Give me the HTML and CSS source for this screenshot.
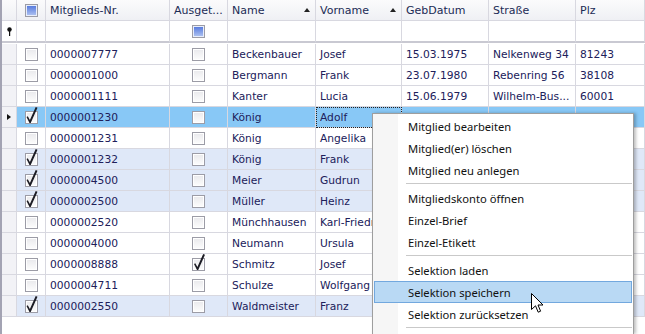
FILE: index.html
```html
<!DOCTYPE html>
<html lang="de">
<head>
    <meta charset="UTF-8">
    <title>Mitglieder</title>
    <link rel="stylesheet" href="styles.css">
</head>
<body>
    <div class="grid">
        <div class="row head">
            <div class="cell ind"></div>
            <div class="cell chk"><span class="box blue"></span></div>
            <div class="cell">Mitglieds-Nr.</div>
            <div class="cell">Ausget...</div>
            <div class="cell sort">Name<span class="arrow"></span></div>
            <div class="cell sort">Vorname<span class="arrow"></span></div>
            <div class="cell">GebDatum</div>
            <div class="cell">Straße</div>
            <div class="cell">Plz</div>
        </div>
        <div class="row filter">
            <div class="cell ind">
                <svg width="7" height="9" viewBox="0 0 7 9"><circle cx="3.5" cy="2.5" r="2.2" fill="#111"/><rect x="3" y="4" width="1.2" height="5" fill="#111"/></svg>
            </div>
            <div class="cell"></div>
            <div class="cell"></div>
            <div class="cell chk"><span class="box blue"></span></div>
            <div class="cell"></div>
            <div class="cell"></div>
            <div class="cell"></div>
            <div class="cell"></div>
            <div class="cell"></div>
        </div>

        <div class="row">
            <div class="cell ind"></div><div class="cell chk"><span class="box"></span></div>
            <div class="cell">0000007777</div><div class="cell chk"><span class="box"></span></div>
            <div class="cell">Beckenbauer</div><div class="cell">Josef</div>
            <div class="cell">15.03.1975</div><div class="cell">Nelkenweg 34</div><div class="cell">81243</div>
        </div>
        <div class="row">
            <div class="cell ind"></div><div class="cell chk"><span class="box"></span></div>
            <div class="cell">0000001000</div><div class="cell chk"><span class="box"></span></div>
            <div class="cell">Bergmann</div><div class="cell">Frank</div>
            <div class="cell">23.07.1980</div><div class="cell">Rebenring 56</div><div class="cell">38108</div>
        </div>
        <div class="row">
            <div class="cell ind"></div><div class="cell chk"><span class="box"></span></div>
            <div class="cell">0000001111</div><div class="cell chk"><span class="box"></span></div>
            <div class="cell">Kanter</div><div class="cell">Lucia</div>
            <div class="cell">15.06.1979</div><div class="cell">Wilhelm-Bus...</div><div class="cell">60001</div>
        </div>
        <div class="row selected">
            <div class="cell ind"><span class="current"></span></div><div class="cell chk"><span class="box on"></span></div>
            <div class="cell">0000001230</div><div class="cell chk"><span class="box"></span></div>
            <div class="cell">König</div><div class="cell focus">Adolf</div>
            <div class="cell"></div><div class="cell"></div><div class="cell"></div>
        </div>
        <div class="row">
            <div class="cell ind"></div><div class="cell chk"><span class="box"></span></div>
            <div class="cell">0000001231</div><div class="cell chk"><span class="box"></span></div>
            <div class="cell">König</div><div class="cell">Angelika</div>
            <div class="cell"></div><div class="cell"></div><div class="cell"></div>
        </div>
        <div class="row marked">
            <div class="cell ind"></div><div class="cell chk"><span class="box on"></span></div>
            <div class="cell">0000001232</div><div class="cell chk"><span class="box"></span></div>
            <div class="cell">König</div><div class="cell">Frank</div>
            <div class="cell"></div><div class="cell"></div><div class="cell"></div>
        </div>
        <div class="row marked">
            <div class="cell ind"></div><div class="cell chk"><span class="box on"></span></div>
            <div class="cell">0000004500</div><div class="cell chk"><span class="box"></span></div>
            <div class="cell">Meier</div><div class="cell">Gudrun</div>
            <div class="cell"></div><div class="cell"></div><div class="cell"></div>
        </div>
        <div class="row marked">
            <div class="cell ind"></div><div class="cell chk"><span class="box on"></span></div>
            <div class="cell">0000002500</div><div class="cell chk"><span class="box"></span></div>
            <div class="cell">Müller</div><div class="cell">Heinz</div>
            <div class="cell"></div><div class="cell"></div><div class="cell"></div>
        </div>
        <div class="row">
            <div class="cell ind"></div><div class="cell chk"><span class="box"></span></div>
            <div class="cell">0000002520</div><div class="cell chk"><span class="box"></span></div>
            <div class="cell">Münchhausen</div><div class="cell">Karl-Friedrich</div>
            <div class="cell"></div><div class="cell"></div><div class="cell"></div>
        </div>
        <div class="row">
            <div class="cell ind"></div><div class="cell chk"><span class="box"></span></div>
            <div class="cell">0000004000</div><div class="cell chk"><span class="box"></span></div>
            <div class="cell">Neumann</div><div class="cell">Ursula</div>
            <div class="cell"></div><div class="cell"></div><div class="cell"></div>
        </div>
        <div class="row">
            <div class="cell ind"></div><div class="cell chk"><span class="box"></span></div>
            <div class="cell">0000008888</div><div class="cell chk"><span class="box on"></span></div>
            <div class="cell">Schmitz</div><div class="cell">Josef</div>
            <div class="cell"></div><div class="cell"></div><div class="cell"></div>
        </div>
        <div class="row">
            <div class="cell ind"></div><div class="cell chk"><span class="box"></span></div>
            <div class="cell">0000004711</div><div class="cell chk"><span class="box"></span></div>
            <div class="cell">Schulze</div><div class="cell">Wolfgang</div>
            <div class="cell"></div><div class="cell"></div><div class="cell"></div>
        </div>
        <div class="row marked">
            <div class="cell ind"></div><div class="cell chk"><span class="box on"></span></div>
            <div class="cell">0000002550</div><div class="cell chk"><span class="box"></span></div>
            <div class="cell">Waldmeister</div><div class="cell">Franz</div>
            <div class="cell"></div><div class="cell"></div><div class="cell"></div>
        </div>
    </div>

    <!-- Kontextmenue -->
    <div class="menu">
        <div class="item">Mitglied bearbeiten</div>
        <div class="item">Mitglied(er) löschen</div>
        <div class="item">Mitglied neu anlegen</div>
        <div class="sep"></div>
        <div class="item">Mitgliedskonto öffnen</div>
        <div class="item">Einzel-Brief</div>
        <div class="item">Einzel-Etikett</div>
        <div class="sep"></div>
        <div class="item">Selektion laden</div>
        <div class="item hot">Selektion speichern
            <svg class="cursor" width="13" height="21" viewBox="0 0 13 21"><path d="M0.5 0.5 L0.5 16.5 L4.5 12.8 L7.2 19.2 L9.6 18.2 L7 12 L12 12 Z" fill="#fff" stroke="#000" stroke-width="1" stroke-linejoin="round"/></svg>
        </div>
        <div class="item">Selektion zurücksetzen</div>
        <div class="sep"></div>
    </div>
</body>
</html>
```

FILE: styles.css
```css
body {
    margin: 0;
    background: #fff;
    font-family: "DejaVu Sans", Verdana, sans-serif;
    font-size: 10.7px;
    color: #20205a;
    overflow: hidden;
    height: 334px;
}

.grid {
    height: 334px;
    border-left: 2px solid #a3a3b3;
}

.row {
    display: grid;
    grid-template-columns: 15px 29px 124px 58px 88px 86px 87px 87px 69px;
    height: 21px;
}

.cell {
    border-right: 1px solid #d8d8e0;
    border-bottom: 1px solid #d8d8e0;
    padding-left: 4px;
    display: flex;
    align-items: center;
    white-space: nowrap;
    overflow: hidden;
}

.cell.ind {
    background: #f2f2f6;
    padding: 0;
    justify-content: center;
}

.cell.chk {
    padding: 0;
    justify-content: center;
    overflow: visible;
}

/* header + filter */
.head .cell {
    background: linear-gradient(#fbfbfc, #eff0f4);
    color: #1b2b55;
    font-size: 11px;
}

.head .cell.ind {
    background: linear-gradient(#fbfbfc, #eff0f4);
}

.sort {
    justify-content: space-between;
    padding-right: 5px;
}

.arrow {
    width: 0;
    height: 0;
    border-left: 3.5px solid transparent;
    border-right: 3.5px solid transparent;
    border-bottom: 4px solid #222;
}

.filter {
    height: 23px;
}

.filter .cell {
    border-bottom: 2px solid #c9c9d2;
    margin-bottom: 1px;
}

.filter .cell.ind {
    background: #fff;
}

/* row states */
.marked .cell {
    background: #dfe8f8;
}

.selected .cell {
    background: #88c8f6;
}

.marked .cell.ind,
.selected .cell.ind {
    background: #f2f2f6;
}

.focus {
    outline: 1px dotted #222;
    outline-offset: -1px;
}

.current {
    width: 0;
    height: 0;
    border-top: 3.5px solid transparent;
    border-bottom: 3.5px solid transparent;
    border-left: 4px solid #111;
}

/* checkboxes */
.box {
    position: relative;
    width: 11px;
    height: 11px;
    border: 1px solid #9c9ca6;
    background: linear-gradient(#e9e9ec, #fdfdfd);
    box-shadow: inset 0 0 0 1px #fff;
}

.box.blue {
    background: linear-gradient(#4f74dc, #b3c6f2);
    box-shadow: inset 0 0 0 1px #e8eefb;
}

.box.on::after {
    content: "";
    position: absolute;
    left: -1px;
    top: -5px;
    width: 14px;
    height: 18px;
    background: #1c1c24;
    clip-path: polygon(2px 10.5px, 3.3px 9.8px, 5.4px 13.6px, 11.2px 0.4px, 13px 1.2px, 6.2px 16.4px, 5px 16.4px);
}

/* context menu */
.menu {
    position: absolute;
    left: 372px;
    top: 113px;
    width: 262px;
    height: 221px;
    overflow: hidden;
    box-sizing: border-box;
    border: 1px solid #9e9e9e;
    border-bottom: none;
    background: linear-gradient(90deg, #f6f6f6 0, #f6f6f6 25px, #fff 25px);
    box-shadow: 2px 0 3px rgba(0, 0, 0, 0.25);
    font-family: "Noto Sans", "Open Sans", sans-serif;
    font-size: 11.2px;
    color: #111;
}

.item {
    position: relative;
    height: 22px;
    line-height: 21px;
    padding-left: 33px;
    margin: 0 1px;
    box-sizing: border-box;
    border: 1px solid transparent;
}

.menu .item:first-child {
    margin-top: 1px;
}

.item.hot {
    background: #b9d9f4;
    border-color: #72a8de;
}

.sep {
    height: 6px;
    margin-left: 33px;
    margin-right: 1px;
    background: linear-gradient(transparent 2px, #c9c9c9 2px, #c9c9c9 3px, transparent 3px);
}

.cursor {
    position: absolute;
    left: 156px;
    top: 11px;
}
```
